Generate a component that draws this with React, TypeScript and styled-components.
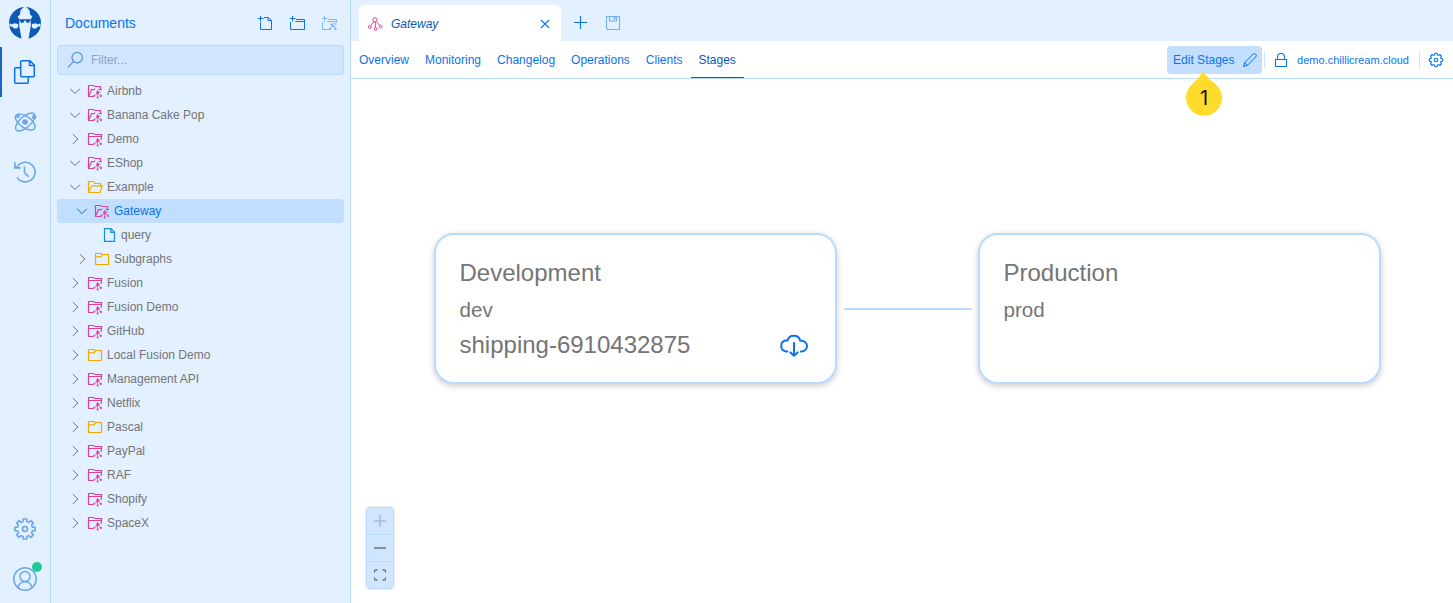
import React from "react";
import styled, { createGlobalStyle, css } from "styled-components";

const GlobalStyle = createGlobalStyle`
  *, *::before, *::after { box-sizing: border-box; }
  html, body { margin: 0; padding: 0; }
  body {
    font-family: "Liberation Sans", Arial, Helvetica, sans-serif;
    font-size: 12px;
    overflow: hidden;
    background: #fff;
  }
`;

const color = {
  panel: "#e2f0ff",
  field: "#d0e6ff",
  selected: "#c1deff",
  line: "#b9dbff",
  primary: "#0a73eb",
  deep: "#0b5ab5",
  muted: "#6ba6ea",
  text: "#757575",
  pink: "#e0409a",
  amber: "#f2a900",
  file: "#1590d0",
};

/* ---------- layout ---------- */

const Shell = styled.div`
  display: flex;
  width: 100vw;
  height: 100vh;
  overflow: hidden;
`;

const Rail = styled.nav`
  flex: none;
  display: flex;
  flex-direction: column;
  align-items: center;
  width: 51px;
  background: ${color.panel};
  border-right: 1px solid ${color.line};
`;

const Brand = styled.div`
  height: 47px;
  padding-top: 6px;
`;

const RailButton = styled.button<{ $active?: boolean }>`
  display: flex;
  align-items: center;
  justify-content: center;
  width: 100%;
  height: 50px;
  padding: 0;
  border: 0;
  border-left: 2px solid ${(p) => (p.$active ? "#1c63c4" : "transparent")};
  border-right: 2px solid transparent;
  background: none;
  color: ${(p) => (p.$active ? color.primary : color.muted)};
`;

const RailFooter = styled.div`
  width: 100%;
  margin-top: auto;
  margin-bottom: -1px;
`;

const Avatar = styled.span`
  position: relative;
  display: flex;
`;

const OnlineDot = styled.span`
  position: absolute;
  top: -5px;
  right: -5px;
  width: 10px;
  height: 10px;
  border-radius: 50%;
  background: #21c997;
`;

const Sidebar = styled.aside`
  flex: none;
  display: flex;
  flex-direction: column;
  width: 300px;
  padding: 0 6px;
  background: ${color.panel};
  border-right: 1px solid ${color.line};
`;

const SidebarHeader = styled.header`
  display: flex;
  align-items: center;
  height: 45px;
  padding: 0 7px 0 8px;
`;

const SidebarTitle = styled.h1`
  flex: 1;
  margin: 0;
  padding-top: 1px;
  font-size: 14px;
  font-weight: 400;
  line-height: 16px;
  color: ${color.primary};
`;

const HeaderActions = styled.div`
  display: flex;
  gap: 16px;
`;

const HeaderAction = styled.button<{ $disabled?: boolean }>`
  display: flex;
  padding: 0;
  border: 0;
  background: none;
  color: ${color.primary};
  opacity: ${(p) => (p.$disabled ? 0.45 : 1)};
`;

const FilterField = styled.div`
  display: flex;
  align-items: center;
  gap: 7px;
  height: 30px;
  margin-bottom: 4px;
  padding: 0 8px;
  border: 1px solid ${color.line};
  border-radius: 4px;
  background: ${color.field};
  color: #5b8fc9;
`;

const Placeholder = styled.span`
  color: #8ba3bf;
  font-size: 12px;
`;

const Tree = styled.ul`
  margin: 0;
  padding: 0;
  list-style: none;
`;

const TreeRow = styled.li<{ $depth: number; $selected?: boolean }>`
  display: flex;
  align-items: center;
  height: 24px;
  padding-left: ${(p) => 10 + p.$depth * 7}px;
  border-radius: 4px;
  color: ${color.text};
  ${(p) =>
    p.$selected &&
    css`
      background: ${color.selected};
      color: ${color.primary};
    `}
`;

const ChevronSlot = styled.span`
  display: flex;
  width: 16px;
  height: 16px;
  margin-right: 4px;
`;

const KindSlot = styled.span<{ $tint: string }>`
  display: flex;
  width: 16px;
  height: 16px;
  margin-right: 4px;
  color: ${(p) => p.$tint};
`;

const Main = styled.main`
  flex: 1;
  display: flex;
  flex-direction: column;
  min-width: 0;
`;

const TabStrip = styled.div`
  display: flex;
  flex: none;
  height: 41px;
  padding: 5px 0 0 8px;
  background: ${color.panel};
`;

const DocTab = styled.div`
  display: flex;
  align-items: center;
  width: 202px;
  height: 36px;
  padding: 1px 10px 0 8px;
  border-radius: 6px 6px 0 0;
  background: #fff;
  color: ${color.primary};
`;

const DocTabTitle = styled.span`
  flex: 1;
  margin-left: 4px;
  font-style: italic;
  color: ${color.deep};
`;

const StripAction = styled.button<{ $dim?: boolean }>`
  display: flex;
  align-items: center;
  width: 16px;
  height: 35px;
  margin-left: ${(p) => (p.$dim ? 16 : 12)}px;
  padding: 0;
  border: 0;
  background: none;
  color: ${color.primary};
  opacity: ${(p) => (p.$dim ? 0.5 : 1)};
`;

const Toolbar = styled.div`
  display: flex;
  align-items: center;
  flex: none;
  height: 38px;
  padding-right: 9px;
  border-bottom: 1px solid ${color.line};
  color: ${color.primary};
`;

const PageLink = styled.a<{ $active?: boolean }>`
  height: 37px;
  padding: 0 8px;
  line-height: 38px;
  color: ${(p) => (p.$active ? color.deep : color.primary)};
  box-shadow: ${(p) => (p.$active ? `inset 0 -1px 0 ${color.deep}` : "none")};
`;

const ToolbarSpacer = styled.div`
  flex: 1;
`;

const EditButton = styled.button`
  position: relative;
  z-index: 1;
  display: flex;
  align-items: center;
  justify-content: space-between;
  width: 95px;
  height: 28px;
  margin-right: 2px;
  padding: 0 4px 0 6px;
  border: 0;
  border-radius: 4px;
  background: #c4deff;
  color: ${color.primary};
  font: inherit;
`;

const Separator = styled.i`
  width: 1px;
  height: 16px;
  background: #cfe4fb;
`;

const Endpoint = styled.div`
  display: flex;
  align-items: center;
  gap: 8px;
  padding: 0 10px 0 8px;
  font-size: 11px;
`;

const GearHolder = styled.div`
  display: flex;
  padding-left: 8px;
`;

const Marker = styled.div`
  position: absolute;
  left: 19px;
  top: 24px;
  width: 36px;
  height: 46px;
  padding-top: 10px;
  text-align: center;
  font-family: Inter, "Noto Sans", sans-serif;
  font-size: 20px;
  line-height: 37px;
  color: #111;
`;

const MarkerShape = styled.svg`
  position: absolute;
  left: 0;
  top: 0;
`;

const MarkerLabel = styled.span`
  position: relative;
`;

const Canvas = styled.section`
  position: relative;
  flex: 1;
  background: #fff;
`;

const StageNode = styled.article<{ $x: number; $y: number }>`
  position: absolute;
  left: ${(p) => p.$x}px;
  top: ${(p) => p.$y}px;
  display: flex;
  flex-direction: column;
  width: 403px;
  height: 151px;
  padding: 22px 25px 0 23.5px;
  border: 2px solid ${color.line};
  border-radius: 20px;
  background: #fff;
  box-shadow: 0 2px 6px rgba(0, 0, 0, 0.2);
  color: ${color.text};
`;

const StageTitle = styled.h2`
  margin: 0;
  font-size: 24px;
  font-weight: 400;
  line-height: 32px;
`;

const StageKey = styled.p`
  margin: 5px 0 2px;
  font-size: 20.6px;
  line-height: 32px;
`;

const StageVersion = styled.div`
  display: flex;
  align-items: center;
  justify-content: space-between;
  height: 34px;
  font-size: 24px;
`;

const DownloadButton = styled.button`
  display: flex;
  padding: 0;
  border: 0;
  background: none;
  color: ${color.primary};
`;

const StageEdge = styled.div`
  position: absolute;
  left: 493px;
  top: 229px;
  width: 128px;
  height: 2px;
  background: ${color.line};
`;

const ViewControls = styled.div`
  position: absolute;
  left: 15px;
  bottom: 14px;
  width: 28px;
  border: 1px solid ${color.line};
  border-radius: 4px;
  background: ${color.field};
  box-shadow: 0 0 3px rgba(0, 0, 0, 0.15);
`;

const ViewButton = styled.button<{ $dim?: boolean }>`
  display: flex;
  align-items: center;
  justify-content: center;
  width: 26px;
  height: 27px;
  padding: 0;
  border: 0;
  border-bottom: 1px solid ${color.line};
  background: none;
  color: ${(p) => (p.$dim ? "#a8b9cb" : "#737373")};
  &:last-child {
    height: 26px;
    border-bottom: 0;
  }
`;

/* ---------- icons ---------- */

const IconSvg = styled.svg`
  flex: none;
  fill: none;
  stroke: currentColor;
`;

const Dots = styled.g`
  fill: currentColor;
  stroke: none;
`;

type IconProps = { size?: number; w?: number; children: React.ReactNode };
const Icon = ({ size = 16, w = 1, children }: IconProps) => (
  <IconSvg width={size} height={size} viewBox={`0 0 ${size} ${size}`} strokeWidth={w}>
    {children}
  </IconSvg>
);

const gearPath = (c: number, outer: number, inner: number) => {
  const pts: string[] = [];
  for (let i = 0; i < 8; i++) {
    const a = (i * Math.PI) / 4 - Math.PI / 2;
    [
      [-0.25, inner],
      [-0.17, outer],
      [0.17, outer],
      [0.25, inner],
    ].forEach(([d, r]) => pts.push(`${(c + r * Math.cos(a + d)).toFixed(2)} ${(c + r * Math.sin(a + d)).toFixed(2)}`));
  }
  return `M${pts.join("L")}Z`;
};

const Logo = () => (
  <svg width="34" height="34" viewBox="0 0 34 34">
    <circle cx="17" cy="17" r="16" fill={color.deep} />
    <path
      fill={color.panel}
      d="M12.2 5.5Q13.2 2.2 17 0.8Q20.8 2.2 21.8 5.5L22 8.5L24.4 10.4Q23.6 12.6 22.4 12.9L22.9 19L20.4 33.6Q17 34.6 13.6 33.6L11.1 19L11.6 12.9Q10.4 12.6 9.6 10.4L12 8.5Z"
    />
    <path
      fill={color.panel}
      d="M1.6 17.2L4 18.4L6.2 17.2L10 18L10.4 20.4L8.8 22.4L6 22.6L4 20.6L1.4 20.4Z M32.4 17.2L30 18.4L27.8 17.2L24 18L23.6 20.4L25.2 22.4L28 22.6L30 20.6L32.6 20.4Z"
    />
    <path
      fill={color.deep}
      d="M12 13.3H22V14.6L21.4 16.2Q19.6 17.3 18.2 16.2L17.6 14.6H16.4L15.8 16.2Q14.4 17.3 12.6 16.2L12 14.6Z"
    />
  </svg>
);

const DocumentsIcon = () => (
  <Icon size={26} w={1.5}>
    <path
      d="M9.7 1.7H18L22.3 6V16.8Q22.3 17.8 21.3 17.8H9.7Q8.7 17.8 8.7 16.8V2.7Q8.7 1.7 9.7 1.7Z M17.5 2V6.5H22"
      strokeLinejoin="round"
    />
    <path d="M8.5 8.7H3.7Q2.7 8.7 2.7 9.7V23.3Q2.7 24.3 3.7 24.3H15.3Q16.3 24.3 16.3 23.3V18.2" />
  </Icon>
);

const AtomIcon = () => (
  <Icon size={26} w={1.4}>
    <ellipse cx="13.2" cy="13" rx="11.4" ry="5.6" transform="rotate(35 13.2 13)" />
    <ellipse cx="13.2" cy="13" rx="12" ry="5.4" transform="rotate(-42 13.2 13)" />
    <Dots>
      <circle cx="13" cy="13" r="2.8" />
      <circle cx="5.9" cy="7" r="2" />
      <circle cx="22.2" cy="8" r="2.2" />
    </Dots>
  </Icon>
);

const HistoryIcon = () => (
  <Icon size={26} w={1.6}>
    <path d="M4.8 8.2A9.8 9.8 0 1 1 5 18.4" />
    <path d="M2.9 3.3V8.9H8.6 M12.5 7.5V13.6L16.6 17.7" />
  </Icon>
);

const SettingsIcon = () => (
  <Icon size={24} w={1.6}>
    <path d={gearPath(12, 10.2, 7.7)} strokeLinejoin="round" />
    <circle cx="12" cy="12" r="2.5" />
  </Icon>
);

const UserIcon = () => (
  <Icon size={24} w={1.5}>
    <circle cx="12" cy="12" r="11.2" />
    <circle cx="12" cy="9.6" r="5" />
    <path d="M5 20.7C5.8 16.8 8.4 14.7 12 14.7S18.2 16.8 19 20.7" />
  </Icon>
);

const NewFileIcon = () => (
  <Icon>
    <path d="M3.5 7.5V14.5H14.5V5.5L11.5 2.5H7 M11 2.5V5.5H14.5 M3.5 1V6.5 M0.8 3.5H6.5" />
  </Icon>
);

const NewFolderIcon = () => (
  <Icon>
    <path d="M1.5 7V14.5H15.5V4.5H7 M6.5 6.5H15.5 M3.5 1V6.5 M0.8 3.5H6.5" />
  </Icon>
);

const NewApiIcon = () => (
  <Icon>
    <path d="M1.5 7V14.5H8 M7 4.5H15.5V7.5 M6.5 6.5H15 M3.5 1V6.5 M0.8 3.5H6.5" />
    <path d="M11.5 10.5L9.5 13.5 M11.5 10.5L14 13.5 M11.5 10.5V8 M9 9L14.5 12" />
    <Dots>
      <path d="M10.5 9.5h2v2h-2z M8 13h2v2H8z M13.5 13h2v2h-2z M13.6 8h1.6v1.6h-1.6z" />
    </Dots>
  </Icon>
);

const SearchIcon = () => (
  <Icon size={18} w={1.2}>
    <circle cx="11.2" cy="6.6" r="5.2" />
    <path d="M7.6 10.4L2 16.4" />
  </Icon>
);

const Chevron = ({ open }: { open: boolean }) => (
  <Icon>{open ? <path d="M3.2 5.8L8 10.6L12.8 5.8" /> : <path d="M5.8 3.2L11 8L5.8 12.8" />}</Icon>
);

const FolderIcon = ({ open }: { open: boolean }) => (
  <Icon w={1.2}>
    {open ? (
      <path d="M1.5 13.5V2.5H6.5L8 4.5H13.5V6.5 M1.5 13.5L4.8 6.8H15.3L13 13.5Z" />
    ) : (
      <path d="M1.5 13.5V2.5H6.8L8.2 3.5H14.5V13.5Z M1.5 5.8H7L8.5 3.8" />
    )}
  </Icon>
);

const ApiFolderIcon = ({ open }: { open: boolean }) => (
  <Icon w={1.2}>
    {open ? (
      <path d="M7 13.5H1.5V2.5H6.5L8 3.5H13.5V6.5 M1.7 13L4.6 6.6H7L8 5.8 M11.5 6.5H15" />
    ) : (
      <path d="M6.5 13.5H1.5V2.5H6.5L8 3.5H14.5V8.5 M1.5 5.5H14" />
    )}
    <path d="M10.6 10V7 M10.6 10L7.4 12.6 M10.6 10L13.8 12.6 M10.6 10V14.4 M10.6 9.6L13.8 8.6" strokeWidth="0.8" />
    <Dots>
      <circle cx="10.6" cy="9.6" r="1.5" />
      <circle cx="7.2" cy="12.8" r="1" />
      <circle cx="13.9" cy="12.9" r="1.1" />
      <circle cx="10.6" cy="14.6" r="1" />
    </Dots>
  </Icon>
);

const FileIcon = () => (
  <Icon w={1.2}>
    <path d="M3.5 1.6H10L13.5 5.2V14.4H3.5Z M9.8 1.8V5.4H13.4" />
  </Icon>
);

const ApiIcon = () => (
  <Icon w={1}>
    <circle cx="8" cy="3.8" r="2.1" />
    <circle cx="2.8" cy="11" r="1.4" />
    <circle cx="8.6" cy="13" r="1.4" />
    <circle cx="13.6" cy="10.6" r="1.4" />
    <path d="M7 5.6L3.5 9.8 M8.2 6L8.5 11.5 M9.3 5.5L12.7 9.5" />
  </Icon>
);

const CloseIcon = () => (
  <Icon size={12} w={1.1}>
    <path d="M2 2L10 10M10 2L2 10" />
  </Icon>
);

const PlusIcon = () => (
  <Icon w={1.1}>
    <path d="M7.5 1V14M1 7.5H14" />
  </Icon>
);

const SaveIcon = () => (
  <Icon w={1.1}>
    <path d="M1.5 1.5H14.5V14.5H3L1.5 13Z M4.5 1.5V6H11.5V1.5" />
    <Dots>
      <path d="M8.5 2.2H10.5V4.6H8.5Z" />
    </Dots>
  </Icon>
);

const PencilIcon = () => (
  <Icon w={1}>
    <path d="M1.5 14.5L2.7 10.6L11 2.3Q12.4 1 13.7 2.3Q15 3.6 13.7 5L5.4 13.3Z M2.7 10.6L5.4 13.3" strokeLinejoin="round" />
  </Icon>
);

const LockIcon = () => (
  <Icon w={1.1}>
    <path d="M2.5 7.5H13.5V14.5H2.5Z M4.5 7.5V5A3.5 3.5 0 0 1 11.5 5V7.5" />
  </Icon>
);

const SmallGearIcon = () => (
  <Icon w={1.1}>
    <path d={gearPath(8, 6.8, 5.3)} strokeLinejoin="round" />
    <circle cx="8" cy="8" r="1.8" />
  </Icon>
);

const CloudIcon = () => (
  <Icon size={32} w={2}>
    <path
      d="M9.4 22.4H7.8A5.5 5.5 0 0 1 7.6 11.6H9.6C10.2 8.6 12.6 6.8 15.8 6.8S21.6 8.6 22.2 11.8H23.4A5.3 5.3 0 0 1 24 22.4H22.8"
      strokeLinecap="round"
      strokeLinejoin="round"
    />
    <path d="M16 14V26.6 M12.4 23.4L16 26.8L19.6 23.4" strokeLinecap="round" strokeLinejoin="round" />
  </Icon>
);

/* ---------- data ---------- */

type Kind = "api" | "folder" | "file";
type Item = { label: string; kind: Kind; open?: boolean; depth?: number; selected?: boolean };

const items: Item[] = [
  { label: "Airbnb", kind: "api", open: true },
  { label: "Banana Cake Pop", kind: "api", open: true },
  { label: "Demo", kind: "api" },
  { label: "EShop", kind: "api", open: true },
  { label: "Example", kind: "folder", open: true },
  { label: "Gateway", kind: "api", open: true, depth: 1, selected: true },
  { label: "query", kind: "file", depth: 2 },
  { label: "Subgraphs", kind: "folder", depth: 1 },
  { label: "Fusion", kind: "api" },
  { label: "Fusion Demo", kind: "api" },
  { label: "GitHub", kind: "api" },
  { label: "Local Fusion Demo", kind: "folder" },
  { label: "Management API", kind: "api" },
  { label: "Netflix", kind: "api" },
  { label: "Pascal", kind: "folder" },
  { label: "PayPal", kind: "api" },
  { label: "RAF", kind: "api" },
  { label: "Shopify", kind: "api" },
  { label: "SpaceX", kind: "api" },
];

const tints: Record<Kind, string> = { api: color.pink, folder: color.amber, file: color.file };
const pages = ["Overview", "Monitoring", "Changelog", "Operations", "Clients", "Stages"];

const KindIcon = ({ kind, open }: { kind: Kind; open: boolean }) => {
  if (kind === "api") return <ApiFolderIcon open={open} />;
  if (kind === "folder") return <FolderIcon open={open} />;
  return <FileIcon />;
};

export default function App() {
  return (
    <Shell>
      <GlobalStyle />
      <Rail>
        <Brand>
          <Logo />
        </Brand>
        <RailButton $active>
          <DocumentsIcon />
        </RailButton>
        <RailButton>
          <AtomIcon />
        </RailButton>
        <RailButton>
          <HistoryIcon />
        </RailButton>
        <RailFooter>
          <RailButton>
            <SettingsIcon />
          </RailButton>
          <RailButton>
            <Avatar>
              <UserIcon />
              <OnlineDot />
            </Avatar>
          </RailButton>
        </RailFooter>
      </Rail>

      <Sidebar>
        <SidebarHeader>
          <SidebarTitle>Documents</SidebarTitle>
          <HeaderActions>
            <HeaderAction>
              <NewFileIcon />
            </HeaderAction>
            <HeaderAction>
              <NewFolderIcon />
            </HeaderAction>
            <HeaderAction $disabled>
              <NewApiIcon />
            </HeaderAction>
          </HeaderActions>
        </SidebarHeader>
        <FilterField>
          <SearchIcon />
          <Placeholder>Filter...</Placeholder>
        </FilterField>
        <Tree>
          {items.map((item) => (
            <TreeRow key={item.label} $depth={item.depth ?? 0} $selected={item.selected}>
              <ChevronSlot>{item.kind !== "file" && <Chevron open={!!item.open} />}</ChevronSlot>
              <KindSlot $tint={tints[item.kind]}>
                <KindIcon kind={item.kind} open={!!item.open} />
              </KindSlot>
              {item.label}
            </TreeRow>
          ))}
        </Tree>
      </Sidebar>

      <Main>
        <TabStrip>
          <DocTab>
            <KindSlot $tint={color.pink}>
              <ApiIcon />
            </KindSlot>
            <DocTabTitle>Gateway</DocTabTitle>
            <CloseIcon />
          </DocTab>
          <StripAction>
            <PlusIcon />
          </StripAction>
          <StripAction $dim>
            <SaveIcon />
          </StripAction>
        </TabStrip>
        <Toolbar>
          {pages.map((page) => (
            <PageLink key={page} $active={page === "Stages"}>
              {page}
            </PageLink>
          ))}
          <ToolbarSpacer />
          <EditButton>
            Edit Stages
            <PencilIcon />
            <Marker>
              <MarkerShape width="36" height="46" viewBox="0 0 36 46">
                <path
                  d="M17 0.5C18.5 5 22 8 28.5 13.2A18 18 0 1 1 7 13.6C12 8.5 15.5 5 17 0.5Z"
                  fill="#ffdb2b"
                />
              </MarkerShape>
              <MarkerLabel>1</MarkerLabel>
            </Marker>
          </EditButton>
          <Separator />
          <Endpoint>
            <LockIcon />
            demo.chillicream.cloud
          </Endpoint>
          <Separator />
          <GearHolder>
            <SmallGearIcon />
          </GearHolder>
        </Toolbar>
        <Canvas>
          <StageEdge />
          <StageNode $x={83} $y={154}>
            <StageTitle>Development</StageTitle>
            <StageKey>dev</StageKey>
            <StageVersion>
              shipping-6910432875
              <DownloadButton>
                <CloudIcon />
              </DownloadButton>
            </StageVersion>
          </StageNode>
          <StageNode $x={627} $y={154}>
            <StageTitle>Production</StageTitle>
            <StageKey>prod</StageKey>
          </StageNode>
          <ViewControls>
            <ViewButton $dim>
              <Icon w={1.5}>
                <path d="M8 2V14M2 8H14" />
              </Icon>
            </ViewButton>
            <ViewButton>
              <Icon w={1.5}>
                <path d="M2 8H14" />
              </Icon>
            </ViewButton>
            <ViewButton>
              <Icon w={1.3}>
                <path d="M2.5 5.5V4Q2.5 3 3.5 3H5.5 M10.5 3H12.5Q13.5 3 13.5 4V5.5 M13.5 10.5V12Q13.5 13 12.5 13H10.5 M5.5 13H3.5Q2.5 13 2.5 12V10.5" />
              </Icon>
            </ViewButton>
          </ViewControls>
        </Canvas>
      </Main>
    </Shell>
  );
}
